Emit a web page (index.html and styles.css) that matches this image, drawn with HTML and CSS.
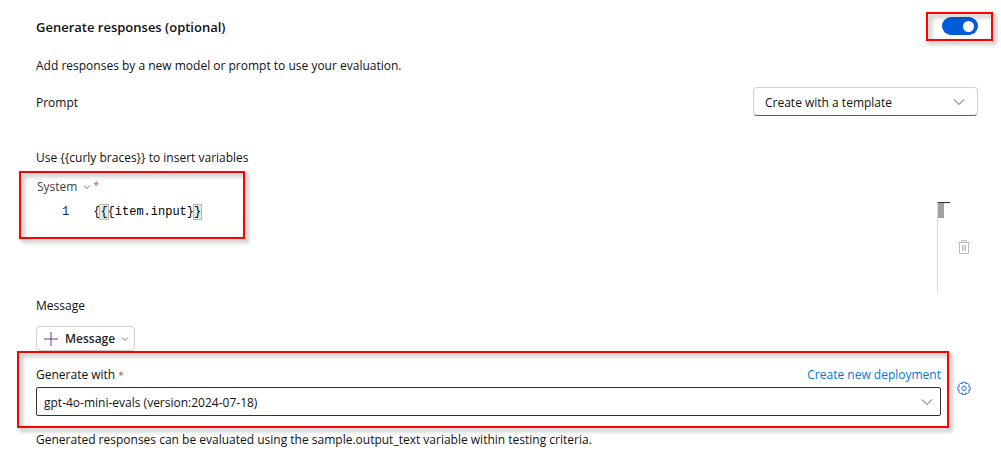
FILE: index.html
```html
<!DOCTYPE html>
<html lang="en">
<head>
<meta charset="utf-8">
<title>Generate responses</title>
<link rel="stylesheet" href="styles.css">
</head>
<body>
<main class="panel">
  <header class="row header">
    <h1 class="title"><label for="generate">Generate responses (optional)</label></h1>
    <span class="marked marked-toggle"><input class="toggle" type="checkbox" role="switch" id="generate" checked></span>
  </header>
  <p class="intro">Add responses by a new model or prompt to use your evaluation.</p>
  <div class="row prompt">
    <label for="template">Prompt</label>
    <span class="select-wrap template">
      <select class="select" id="template"><option>Create with a template</option></select>
      <svg class="chevron" viewBox="0 0 12 12"><path d="M1 3.5 6 8.5 11 3.5"/></svg>
    </span>
  </div>
  <p class="hint">Use {{curly braces}} to insert variables</p>
  <section class="message">
    <div class="editor-column">
      <button class="role" type="button">System <svg class="caret" viewBox="0 0 8 8"><path d="M1 2.5 4 5.5 7 2.5"/></svg><span class="required">*</span></button>
      <div class="editor">
        <pre class="code"><span class="line-number">1</span><code>{<span class="brace">{</span>{item.input}<span class="brace">}</span></code></pre>
        <div class="ruler"><div class="ruler-thumb"></div></div>
      </div>
      <div class="mark mark-system"></div>
    </div>
    <button class="icon-button" type="button" aria-label="Delete">
      <svg class="trash" viewBox="0 0 14 16"><path d="M1 3.5h12M4.5 3.5v-2h5v2M2.5 3.5v11h9v-11M5.5 6v6M7 6v6M8.5 6v6"/></svg>
    </button>
  </section>
  <p class="message-label">Message</p>
  <button class="add" type="button"><svg class="plus" viewBox="0 0 14 14"><path d="M7 0v14M0 7h14"/></svg>Message<svg class="caret" viewBox="0 0 8 8"><path d="M1 2.5 4 5.5 7 2.5"/></svg></button>
  <section class="deployment">
    <div class="marked marked-model">
      <div class="row model-head">
        <label for="model">Generate with <span class="required-inline">*</span></label>
        <a class="link" href="#">Create new deployment</a>
      </div>
      <span class="select-wrap model">
        <select class="select" id="model"><option>gpt-4o-mini-evals (version:2024-07-18)</option></select>
        <svg class="chevron" viewBox="0 0 12 12"><path d="M1 3.5 6 8.5 11 3.5"/></svg>
      </span>
    </div>
    <button class="icon-button" type="button" aria-label="Settings">
      <svg class="gear" viewBox="0 0 16 16"><path d="M6.6 1.2h2.8l.4 1.8 1.6-1 2 2-1 1.6 1.8.4v2.8l-1.8.4 1 1.6-2 2-1.6-1-.4 1.8H6.6l-.4-1.8-1.6 1-2-2 1-1.6-1.8-.4V6l1.8-.4-1-1.6 2-2 1.600 1z"/><circle cx="8" cy="7.4" r="2.2"/></svg>
    </button>
  </section>
  <p class="note">Generated responses can be evaluated using the sample.output_text variable within testing criteria.</p>
</main>
</body>
</html>
```
FILE: styles.css
```css
* { box-sizing: border-box; }

body {
  margin: 0;
  background: #fff;
  color: #111;
  font: 12px/20px "Open Sans", "Noto Sans", sans-serif;
}

button, select { font: inherit; color: inherit; }
p, h1, pre { margin: 0; }
svg { display: block; fill: none; stroke: currentColor; }

.panel { padding: 17px 23px 16px 36px; }
.row { display: flex; align-items: center; justify-content: space-between; }
.title { font-size: 13px; font-weight: 600; line-height: 20px; }

.toggle {
  appearance: none;
  display: block;
  width: 36px;
  height: 18px;
  margin: 0;
  padding: 4px;
  border-radius: 9px;
  background: #015cda;
}
.toggle::before {
  content: "";
  display: block;
  width: 11px;
  height: 11px;
  border-radius: 50%;
  background: #fff;
}
.toggle:checked::before { margin-left: auto; }

.header { align-items: flex-start; }
.marked { position: relative; }
.marked::after, .mark {
  content: "";
  position: absolute;
  border: 2px solid #f00;
  filter: drop-shadow(3px 3px 2px rgba(0, 0, 0, .4));
  pointer-events: none;
}
.marked-toggle::after { inset: -5px -15px -6px -16px; }
.mark-system { top: -6px; left: -17px; width: 226px; height: 68px; }
.marked-model::after { inset: -14px -8px -12px -19px; }

.intro { margin-top: 19px; }
.prompt { margin-top: 11px; }
.prompt label { padding-top: 2px; }

.select-wrap { position: relative; display: block; }
.template { width: 225px; }
.select {
  appearance: none;
  display: block;
  width: 100%;
  height: 29px;
  padding: 2px 32px 0 11px;
  border: 1px solid #d1d1d1;
  border-bottom-color: #616161;
  border-radius: 4px;
  background: #fff;
}
.chevron {
  position: absolute;
  top: 9px;
  right: 13px;
  width: 12px;
  height: 12px;
  color: #555;
  pointer-events: none;
}

.hint { margin-top: 32px; }
.message { display: flex; margin-top: 9px; }
.editor-column { position: relative; flex: 1; }
.role {
  display: flex;
  align-items: center;
  gap: 6px;
  height: 20px;
  padding: 0 1px;
  border: 0;
  background: none;
  color: #424242;
  font-weight: 500;
}
.caret { width: 8px; height: 8px; color: #777; }
.required { align-self: flex-start; margin-left: -4px; color: #d0495a; font-size: 10px; line-height: 16px; }
.required-inline { color: #d0495a; font-size: 10px; }

.editor {
  display: flex;
  justify-content: space-between;
  height: 90px;
  margin-top: 5px;
  background: #fffffe;
}
.code {
  display: flex;
  gap: 24px;
  padding-left: 26px;
  color: #000;
  font: 12px/20px "Liberation Mono", monospace;
}
.code code { font: inherit; }
.line-number { color: #0b216f; }
.brace { background: #e4ece2; outline: 1px solid #b9b9b9; }
.ruler { width: 13px; border-left: 1px solid #d8d8d8; }
.ruler-thumb { height: 16px; border-top: 1px solid #333; background: linear-gradient(#a0a0a0, #a0a0a0) no-repeat 0 0 / 6px 100%; }

.icon-button {
  display: flex;
  align-items: center;
  justify-content: center;
  width: 28px;
  padding: 0;
  border: 0;
  background: none;
}
.message .icon-button { padding-top: 24px; }
.trash { width: 14px; height: 16px; color: #bdbdbd; }

.message-label { margin-top: 4px; }
.add {
  display: flex;
  align-items: center;
  gap: 6px;
  height: 25px;
  margin-top: 10px;
  padding: 0 5px 0 7px;
  border: 1px solid #d1d1d1;
  border-radius: 4px;
  background: #fff;
  color: #242424;
  font-weight: 600;
}
.plus { width: 14px; height: 14px; color: #6b3a7d; margin-right: 1px; }

.deployment { display: flex; margin-top: 14px; }
.marked-model { flex: 1; }
.model { margin-top: 2px; }
.model .select { padding-left: 7px; border-color: #333; border-radius: 2px; }
.model .chevron { right: 8px; }
.link { color: #0078d4; text-decoration: none; }
.deployment .icon-button { align-self: center; width: 37px; padding: 0 0 4px 9px; }
.gear { width: 16px; height: 16px; color: #2c6fdc; }

.note { margin-top: 14px; }
```
